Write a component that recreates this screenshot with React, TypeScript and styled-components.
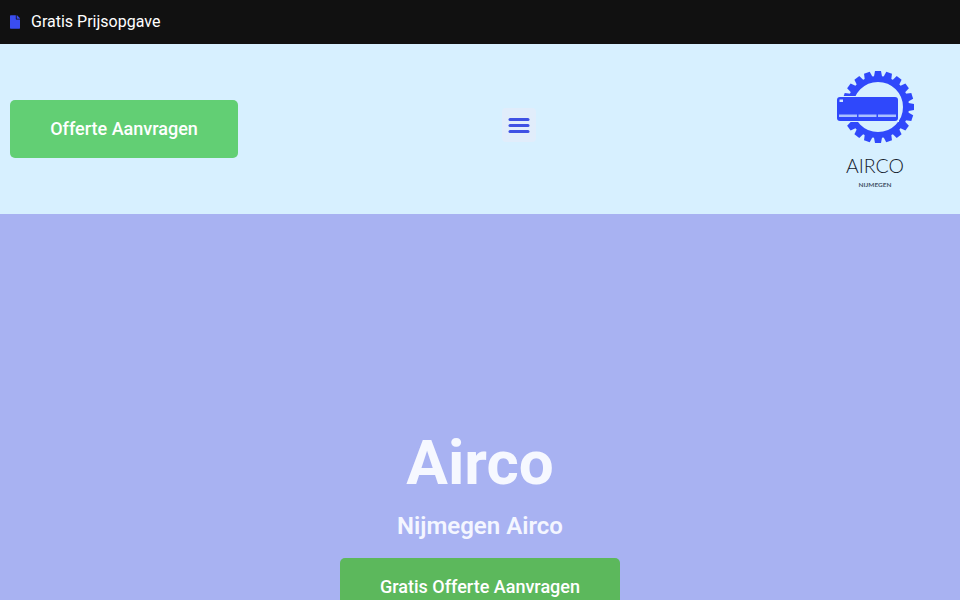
import React from "react";
import styled, { createGlobalStyle } from "styled-components";

const Global = createGlobalStyle`
  html, body { margin: 0; padding: 0; height: 100%; overflow: hidden; }
  body { font-family: Roboto, "Liberation Sans", sans-serif; background: #a8b2f2; }
  * { box-sizing: border-box; }
`;

const TopBar = styled.div`
  height: 44px;
  background: #111111;
  display: flex;
  align-items: center;
  gap: 11px;
  padding: 0 10px 2px;
  color: #ffffff;
  font-size: 16px;
`;

const TopIcon = styled.svg`
  width: 10px;
  height: 14px;
  margin-top: 2px;
  flex: none;
`;

const Header = styled.header`
  height: 170px;
  background: #d7f0ff;
  padding: 10px;
  display: flex;
  align-items: center;
  justify-content: space-between;
`;

const CtaButton = styled.a<{ $width: number; $bg: string }>`
  display: flex;
  align-items: center;
  justify-content: center;
  flex: none;
  width: ${(p) => p.$width}px;
  height: 58px;
  padding-bottom: 2px;
  border-radius: 5px;
  background: ${(p) => p.$bg};
  color: #ffffff;
  font-size: 18px;
  font-weight: 500;
`;

const MenuButton = styled.button`
  width: 34px;
  height: 34px;
  margin-bottom: 8px;
  padding: 0;
  border: 0;
  border-radius: 4px;
  background: #e1edfb;
  display: flex;
  align-items: center;
  justify-content: center;
`;

const Logo = styled.svg`
  width: 150px;
  height: 150px;
  flex: none;
  display: block;
`;

const Hero = styled.section`
  display: flex;
  flex-direction: column;
  align-items: center;
  padding-top: 214px;
  color: #ffffff;
  background: #a8b2f2;
  height: 400px;
`;

const Title = styled.h1`
  margin: 0;
  font-size: 62px;
  line-height: 70px;
  font-weight: 700;
  color: #f6f8ff;
`;

const Subtitle = styled.h2`
  margin: 14px 0 18px;
  font-size: 24px;
  line-height: 28px;
  font-weight: 600;
  color: #f4f6ff;
`;

const FileIcon = () => (
  <TopIcon viewBox="0 0 384 512" fill="#3a4df0" aria-hidden="true">
    <path d="M224 136V0H24C10.700 0 0 10.700 0 24v464c0 13.300 10.700 24 24 24h336c13.300 0 24-10.700 24-24V160H248c-13.200 0-24-10.800-24-24zm160-14.100v6.100H256V0h6.100c6.400 0 12.500 2.500 17 7l97.900 98c4.500 4.500 7 10.600 7 16.900z" />
  </TopIcon>
);

const BarsIcon = () => (
  <svg width="22" height="16" viewBox="0 0 22 16" aria-hidden="true">
    <g fill="#3f51e4">
      <rect x="0.500" y="1" width="21" height="3" rx="1.500" />
      <rect x="0.500" y="7" width="21" height="3" rx="1.500" />
      <rect x="0.500" y="13" width="21" height="3" rx="1.500" />
    </g>
  </svg>
);

const gearTeeth = Array.from({ length: 20 }, (_, i) => i * 18);

const LogoMark = () => (
  <Logo viewBox="0 0 150 150" role="img" aria-label="Airco Nijmegen">
    <circle cx="78" cy="53" r="28" fill="none" stroke="#2f48fb" strokeWidth="6" />
    {gearTeeth.map((a) => (
      <path key={a} d="M73.500 25 L75 17 H81 L82.500 25 Z" fill="#2f48fb" transform={`rotate(${a} 78 53)`} />
    ))}
    <rect x="36" y="42" width="63" height="26" fill="#d7f0ff" />
    <rect x="37" y="43" width="61" height="24" rx="3" fill="#2f48fb" />
    <rect x="39.500" y="45.500" width="3.500" height="2.500" fill="#cfe4ff" />
    <rect x="39" y="60.500" width="18" height="2.500" fill="#a9c0ff" />
    <rect x="58.500" y="60.500" width="18" height="2.500" fill="#a9c0ff" />
    <rect x="78" y="60.500" width="18" height="2.500" fill="#a9c0ff" />
    <text x="75" y="119" textAnchor="middle" fontFamily="Lato, sans-serif" fontWeight="300" fontSize="20" fill="#14202e" textLength="58" lengthAdjust="spacingAndGlyphs">AIRCO</text>
    <text x="75" y="133" textAnchor="middle" fontFamily="Lato, sans-serif" fontWeight="700" fontSize="6" fill="#46546a" textLength="33" lengthAdjust="spacingAndGlyphs">NIJMEGEN</text>
  </Logo>
);

export default function App() {
  return (
    <>
      <Global />
      <TopBar>
        <FileIcon />
        <span>Gratis Prijsopgave</span>
      </TopBar>
      <Header>
        <CtaButton $width={228} $bg="#62cf74">Offerte Aanvragen</CtaButton>
        <MenuButton aria-label="Menu">
          <BarsIcon />
        </MenuButton>
        <LogoMark />
      </Header>
      <Hero>
        <Title>Airco</Title>
        <Subtitle>Nijmegen Airco</Subtitle>
        <CtaButton $width={280} $bg="#5cb85c">Gratis Offerte Aanvragen</CtaButton>
      </Hero>
    </>
  );
}
